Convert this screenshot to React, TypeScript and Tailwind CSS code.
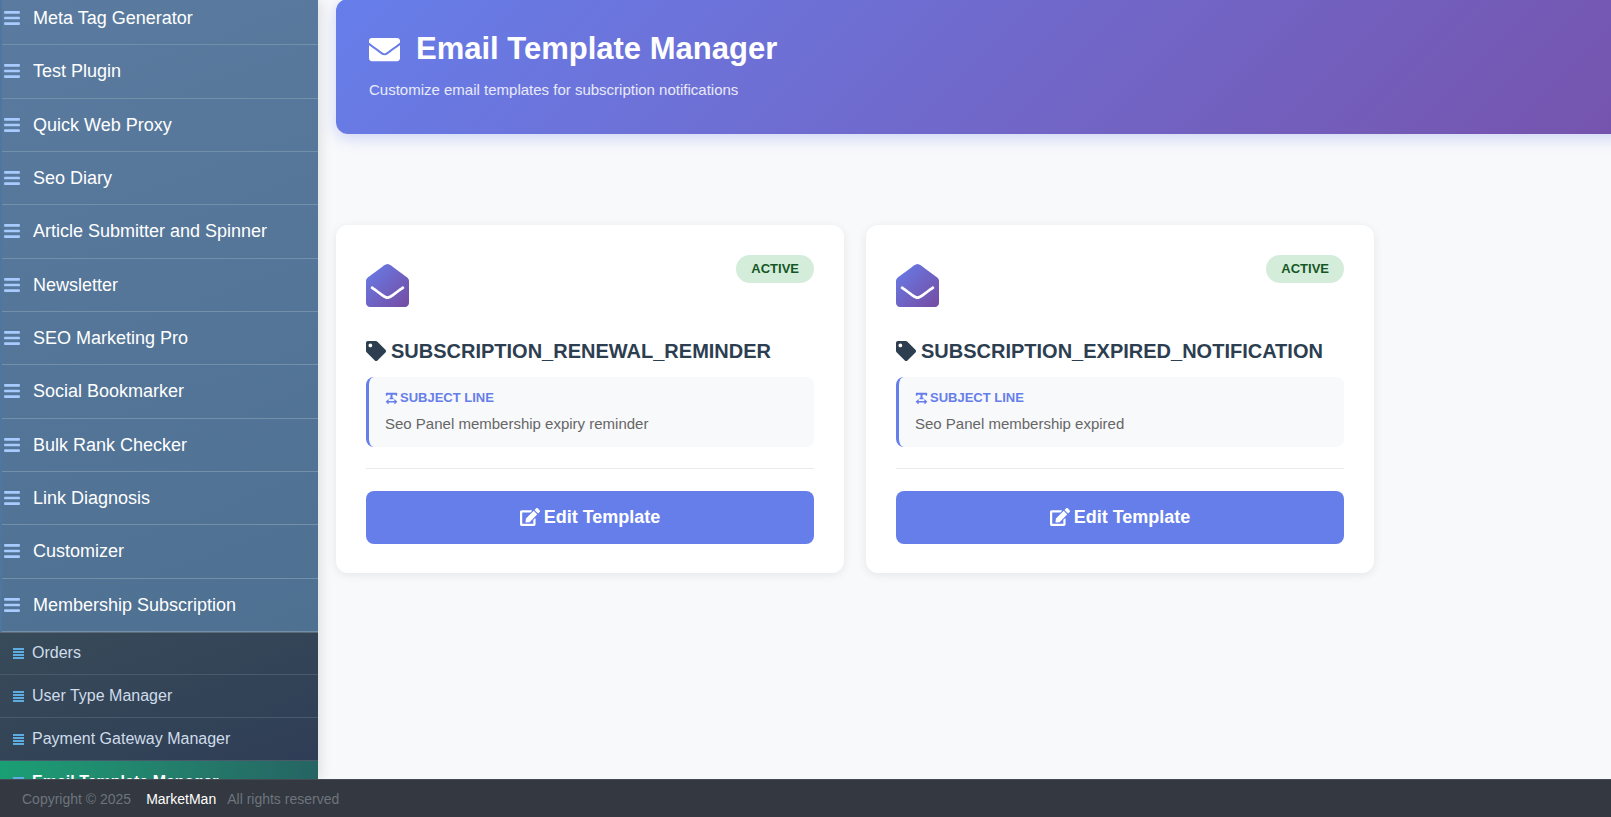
import { FaBars, FaEdit, FaEnvelope, FaTag, FaTextWidth } from 'react-icons/fa';

const plugins = [
  'Meta Tag Generator',
  'Test Plugin',
  'Quick Web Proxy',
  'Seo Diary',
  'Article Submitter and Spinner',
  'Newsletter',
  'SEO Marketing Pro',
  'Social Bookmarker',
  'Bulk Rank Checker',
  'Link Diagnosis',
  'Customizer',
  'Membership Subscription',
];

const subItems = ['Orders', 'User Type Manager', 'Payment Gateway Manager', 'Email Template Manager'];

const templates = [
  { id: 'renewal', name: 'SUBSCRIPTION_RENEWAL_REMINDER', subject: 'Seo Panel membership expiry reminder' },
  { id: 'expired', name: 'SUBSCRIPTION_EXPIRED_NOTIFICATION', subject: 'Seo Panel membership expired' },
];

function ListIcon() {
  return (
    <svg viewBox="0 0 11 11" className="w-[11px] h-[11px] shrink-0 fill-[#5dade2]" aria-hidden="true">
      <path d="M0 0h11v2H0zM0 3h11v2H0zM0 6h11v2H0zM0 9h11v2H0z" />
    </svg>
  );
}

function OpenEnvelopeIcon({ id }: { id: string }) {
  return (
    <svg viewBox="0 0 512 512" className="w-[43px] h-[43px]" aria-hidden="true">
      <defs>
        <linearGradient id={id} x1="0" y1="0" x2="1" y2="1">
          <stop offset="0" stopColor="#667eea" />
          <stop offset="1" stopColor="#764ba2" />
        </linearGradient>
      </defs>
      <path
        fill={`url(#${id})`}
        d="M512 464c0 26.51-21.49 48-48 48H48c-26.51 0-48-21.49-48-48V200.724a48 48 0 0 1 18.387-37.776c24.913-19.529 45.501-35.365 164.2-121.511C199.412 29.17 232.797-.347 256 .003c23.198-.354 56.596 29.172 73.413 41.433 118.687 86.137 139.303 101.995 164.2 121.512A48 48 0 0 1 512 200.724V464zm-65.666-196.605c-2.563-3.728-7.7-4.595-11.339-1.907-22.845 16.873-55.462 40.705-105.582 77.079-16.825 12.266-50.21 41.781-73.413 41.43-23.211.344-56.559-29.143-73.413-41.43-50.114-36.37-82.734-60.204-105.582-77.079-3.639-2.688-8.776-1.821-11.339 1.907l-9.072 13.196a7.998 7.998 0 0 0 1.839 10.967c22.887 16.899 55.454 40.69 105.303 76.868 20.274 14.781 56.524 47.813 92.264 47.573 35.724.242 71.961-32.771 92.263-47.573 49.85-36.179 82.418-59.97 105.303-76.868a7.998 7.998 0 0 0 1.839-10.967l-9.071-13.196z"
      />
    </svg>
  );
}

function Sidebar() {
  return (
    <nav className="w-[318px] shrink-0 bg-[#2c3e50] shadow-[2px_0_12px_rgba(0,0,0,0.12)]">
      <ul className="-mt-2 h-[640px] grid auto-rows-fr bg-linear-160 from-[#5a7b9f] to-[#4e7091] border-l-2 border-[#4f769e]">
        {plugins.map(name => (
          <li key={name} className="border-b border-[#7390ab]">
            <a href="#" className="h-full flex items-center gap-[13px] pl-[2px] text-lg text-white">
              <FaBars className="text-[18px] w-4 text-[#a8cbff]" />
              {name}
            </a>
          </li>
        ))}
      </ul>
      <ul className="bg-linear-160 from-[#384b59] to-[#2d3b55] shadow-[inset_0_1px_0_#5d6b78]">
        {subItems.map(name =>
          name === 'Email Template Manager' ? (
            <li key={name} className="bg-linear-to-r from-[#1a9f74] to-[#256463]">
              <a href="#" className="h-[42px] flex items-center gap-2 pl-[13px] text-base font-bold text-white">
                <ListIcon />
                {name}
              </a>
            </li>
          ) : (
            <li key={name} className="border-b border-[#4a5a6a]">
              <a href="#" className="h-[42px] flex items-center gap-2 pl-[13px] text-base text-[#cfdcea]">
                <ListIcon />
                {name}
              </a>
            </li>
          ),
        )}
      </ul>
    </nav>
  );
}

function TemplateCard({ id, name, subject }: { id: string; name: string; subject: string }) {
  return (
    <article className="bg-white rounded-xl px-[30px] pt-[30px] pb-[29px] shadow-[0_2px_10px_rgba(0,0,0,0.08)]">
      <div className="flex justify-between items-start">
        <div className="h-20 pt-[9px]">
          <OpenEnvelopeIcon id={id} />
        </div>
        <span className="h-7 px-[15px] flex items-center rounded-full bg-[#d4edda] text-[13px] font-bold text-[#155724]">
          ACTIVE
        </span>
      </div>
      <h2 className="h-8 flex items-center gap-[5px] text-xl font-bold text-[#2c3e50]">
        <FaTag />
        {name}
      </h2>
      <div className="mt-[10px] h-[70px] px-4 py-[11px] rounded-lg border-l-3 border-[#667eea] bg-[#f8f9fb]">
        <p className="flex items-center gap-[2px] text-[13px] leading-5 font-bold text-[#667eea]">
          <FaTextWidth />
          SUBJECT LINE
        </p>
        <p className="mt-1 text-[15px] leading-6 text-[#666666]">{subject}</p>
      </div>
      <div className="mt-[21px] pt-[22px] border-t border-[#e9ecef]">
        <button
          type="button"
          className="w-full h-[53px] pb-[2px] flex items-center justify-center gap-1 rounded-lg bg-[#667eea] text-lg font-bold text-white"
        >
          <FaEdit className="text-[20px]" />
          Edit Template
        </button>
      </div>
    </article>
  );
}

export default function App() {
  return (
    <div className="h-screen flex flex-col overflow-hidden bg-[#f8f9fb] font-['Liberation_Sans',Arial,sans-serif]">
      <div className="flex-1 min-h-0 flex overflow-hidden">
        <Sidebar />
        <main className="flex-1 min-w-0 pl-[18px]">
          <header className="-mt-px min-w-[1568px] h-[135px] px-[33px] pt-[30px] rounded-xl bg-linear-135 from-[#667eea] to-[#764ba2] shadow-[0_4px_15px_rgba(102,126,234,0.3)] text-white">
            <h1 className="flex items-center gap-4 text-[31px] leading-10 font-bold">
              <FaEnvelope />
              Email Template Manager
            </h1>
            <p className="mt-[9px] text-[15px] leading-6 text-white/85">Customize email templates for subscription notifications</p>
          </header>
          <section className="mt-[91px] min-w-[1568px] grid grid-cols-3 gap-[22px]">
            {templates.map(t => (
              <TemplateCard key={t.id} {...t} />
            ))}
          </section>
        </main>
      </div>
      <footer className="h-[38px] shrink-0 flex items-center pl-[22px] border-t border-[#454b52] bg-[#343840] text-sm text-[#6c757d]">
        Copyright © 2025
        <a href="#" className="ml-[15px] mr-[11px] text-white">
          MarketMan
        </a>
        All rights reserved
      </footer>
    </div>
  );
}
